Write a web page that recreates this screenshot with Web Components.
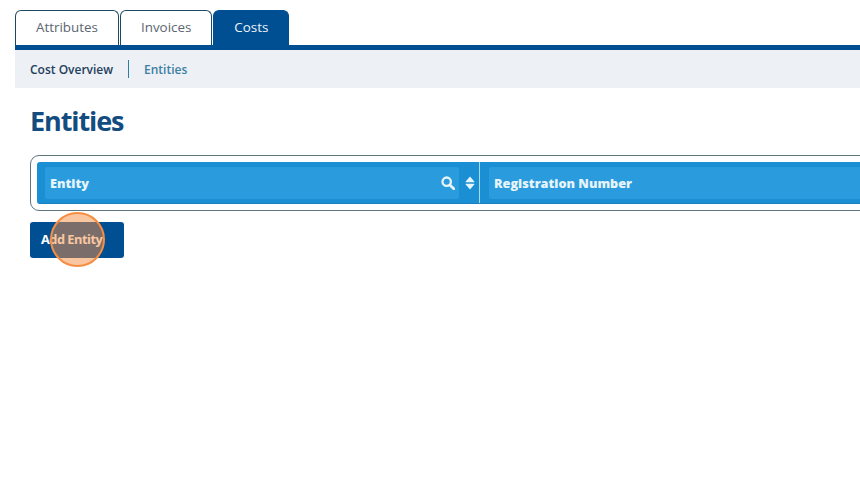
<!DOCTYPE html>
<html><head><meta charset="utf-8">
<style>
html,body{margin:0;padding:0;background:#fff;overflow:hidden}
body{width:860px;height:482px;font-family:"Open Sans",sans-serif}
</style></head>
<body>
<app-page></app-page>
<script>
function def(name,css,html){
  customElements.define(name,class extends HTMLElement{
    constructor(){super();const r=this.attachShadow({mode:'open'});r.innerHTML='<style>'+css+'</style>'+html;}
  });
}
def('tab-item',`
:host{display:block;box-sizing:border-box;height:35px;border:1px solid #1d4a63;border-bottom:none;border-radius:6px 6px 0 0;padding:0 20px;font-size:13.4px;line-height:32px;color:#5b6670;background:#fff}
:host([active]){background:#004f93;border-color:#004f93;color:#eef4fa}
`,`<slot></slot>`);
def('tab-bar',`
:host{display:flex;gap:1px;height:35px;margin-top:10px;box-sizing:border-box;border:0}
`,`<slot></slot>`);
def('sub-nav',`
:host{display:flex;align-items:center;height:38px;background:#edf0f5;border-top:5px solid #004f93;padding-left:15px;font-size:12px;font-weight:600;color:#1f3f5c}
.sep{width:1px;height:18px;background:#2c7ea6;margin:0 15px 0 15px}
a{color:#3c7fa3}
`,`<span>Cost Overview</span><span class="sep"></span><a>Entities</a>`);
def('page-title',`
:host{display:block;margin:16px 0 0 30px;height:51px;font-size:27px;line-height:33px;font-weight:700;color:#134d7f;letter-spacing:-1.1px}
`,`<slot></slot>`);
def('head-cell',`
:host{display:flex;align-items:center;box-sizing:border-box;height:32px;background:#2a9bdc;border-radius:2px;padding:1px 0 0 5px;font-size:12.7px;font-weight:800;color:#e6f4fb;white-space:nowrap}
.t{flex:1}
`,`<span class="t"><slot></slot></span><slot name="icon"></slot>`);
def('data-table',`
:host{display:block;box-sizing:border-box;margin-left:30px;width:860px;height:56px;border:1px solid #5f767f;border-radius:9px;padding:6px;background:#fff}
.band{display:flex;align-items:center;height:42px;background:#1a8fd3;border-radius:3px;border-bottom:1px solid #1a80c0;box-sizing:border-box}
.c1{display:flex;align-items:center;width:443px;height:100%;padding-left:8px;box-sizing:border-box;border-right:1.5px solid #a7dcef}
.c1 head-cell{width:414px}
.sort{display:block;margin-left:6px}
.c2{padding-left:9px;flex:1}
.ic{display:block;margin-right:4px}
`,`<div class="band">
<div class="c1"><head-cell>Entity<svg class="ic" slot="icon" width="14" height="14" viewBox="0 0 14 14" fill="none" stroke="#e6f4fb"><circle cx="5.7" cy="5.7" r="4.2" stroke-width="2.3"/><path d="M8.9 8.9 12.8 12.8" stroke-width="2.8" stroke-linecap="round"/></svg></head-cell>
<svg class="sort" width="10" height="14" viewBox="0 0 10 14" fill="#e6f4fb"><path d="M5 .5 9.3 5.6a.4.4 0 0 1-.3.7H1a.4.4 0 0 1-.3-.7zM5 13.5.7 8.4a.4.4 0 0 1 .3-.7h8a.4.4 0 0 1 .3.7z"/></svg></div>
<div class="c2"><head-cell>Registration Number</head-cell></div>
</div>`);
def('action-button',`
:host{display:block;box-sizing:border-box;width:94px;height:36px;margin:10.5px 0 0 30px;background:#004f93;border-radius:3px;color:#fff;font-size:12.8px;font-weight:700;line-height:35px;padding-left:11px;letter-spacing:-.5px;position:relative}
.spot{position:absolute;left:20px;top:-10px;width:55px;height:55px;box-sizing:border-box;border-radius:50%;border:2.5px solid #f58d42;background:rgba(245,141,66,.5)}
`,`<slot></slot><span class="spot"></span>`);
def('app-page',`
:host{display:block;width:860px;height:482px;overflow:hidden}
.top{margin-left:15px}
`,`<div class="top"><tab-bar><tab-item>Attributes</tab-item><tab-item>Invoices</tab-item><tab-item active>Costs</tab-item></tab-bar><sub-nav></sub-nav></div>
<page-title>Entities</page-title>
<data-table></data-table>
<action-button>Add Entity</action-button>`);
</script>
</body></html>
